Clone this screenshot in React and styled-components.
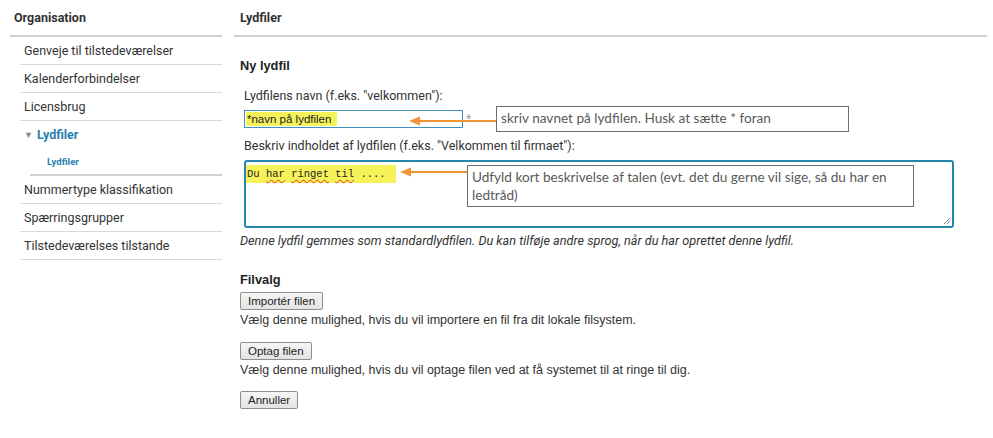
import React from "react";
import styled, { createGlobalStyle } from "styled-components";

const Global = createGlobalStyle`
  html, body { margin: 0; padding: 0; background: #fff; }
  body { width: 993px; height: 438px; overflow: hidden; font-family: Roboto, "Liberation Sans", sans-serif; color: #333; }
`;

const Page = styled.div`
  display: flex;
  align-items: flex-start;
  padding: 0 6px 0 10px;
`;

const Sidebar = styled.nav`
  width: 212px;
  flex: none;
`;

const PanelHeader = styled.div`
  height: 35px;
  display: flex;
  align-items: center;
  padding-left: ${(p) => p.$indent || 4}px;
  font-size: 12.5px;
  font-weight: 700;
  color: #333;
  border-bottom: 2px solid #cfcfcf;
`;

const NavList = styled.ul`
  list-style: none;
  margin: 0 0 0 10px;
  padding: 0;
`;

const NavItem = styled.li`
  height: ${(p) => (p.$thick ? 26 : 27)}px;
  display: flex;
  align-items: center;
  padding-left: ${(p) => (p.$thick ? 17 : 4)}px;
  margin-left: ${(p) => (p.$thick ? 10 : 0)}px;
  font-size: ${(p) => (p.$thick ? 9.6 : 12.5)}px;
  font-weight: ${(p) => (p.$active ? 700 : 400)};
  color: ${(p) => (p.$active ? "#2a7fae" : "#333")};
  border-bottom: ${(p) => (p.$noline ? "none" : p.$thick ? "2px solid #d2d2d2" : "1px solid #d9d9d9")};
`;

const Caret = styled.span`
  color: #8a8a8a;
  font-size: 9px;
  margin-right: 4px;
`;

const Main = styled.main`
  margin-left: 12px;
  flex: 1;
`;

const Content = styled.div`
  padding: 22px 0 0 6px;
`;

const SectionTitle = styled.h3`
  margin: 0;
  font-size: 12.8px;
  line-height: 14px;
  font-weight: 700;
  color: #222;
  font-family: "Liberation Sans", Arial, sans-serif;
`;

const Field = styled.div`
  padding-left: 4px;
  position: relative;
  margin-top: ${(p) => p.$mt}px;
`;

const Label = styled.div`
  font-size: 12.5px;
  color: #333;
  line-height: 14px;
`;

const InputRow = styled.div`
  display: flex;
  align-items: flex-start;
  margin-top: 7px;
`;

const TextInput = styled.div`
  width: 215px;
  height: 16px;
  border: 1px solid #3d8fc0;
  display: flex;
  align-items: center;
  padding: 0 1px;
`;

const Highlight = styled.span`
  background: #f6f25a;
  display: inline-block;
  white-space: pre;
  height: ${(p) => p.$h || 14}px;
  line-height: ${(p) => p.$h || 14}px;
  padding: 0 ${(p) => p.$pr || 6}px 0 1px;
  font-family: ${(p) => (p.$mono ? '"Liberation Mono", "DejaVu Sans Mono", monospace' : '"Liberation Sans", Arial, sans-serif')};
  font-size: ${(p) => (p.$mono ? 10.5 : 11.5)}px;
  color: #222;
`;

const Squiggle = styled.span`
  text-decoration: underline wavy #e03030;
  text-decoration-thickness: 1px;
  text-underline-offset: 2px;
  text-decoration-skip-ink: none;
`;

const Req = styled.span`
  color: #a0a0a0;
  font-size: 12px;
  margin-left: 3px;
  margin-top: 2px;
`;

const TextArea = styled.div`
  margin-top: 7px;
  width: 706px;
  height: 64px;
  border: 2px solid #2388ab;
  border-radius: 3px;
  position: relative;
`;

const Grip = styled.svg`
  position: absolute;
  right: 1px;
  bottom: 1px;
`;

const Note = styled.div`
  margin-top: 5px;
  font-size: 12.7px;
  line-height: 15px;
  font-style: italic;
  color: #333;
`;

const Callout = styled.div`
  position: absolute;
  left: ${(p) => p.$x}px;
  top: ${(p) => p.$y}px;
  width: ${(p) => p.$w}px;
  height: ${(p) => p.$h}px;
  box-sizing: border-box;
  border: 1px solid #6e6e6e;
  background: #fff;
  padding: 2px 4px;
  font-family: Lato, "Open Sans", sans-serif;
  font-size: 13.6px;
  line-height: 18px;
  color: #5a5a5a;
`;

const Arrow = styled.svg`
  position: absolute;
  left: ${(p) => p.$x}px;
  top: ${(p) => p.$y}px;
  overflow: visible;
`;

const FileSection = styled.div`
  margin-top: 25px;
`;

const Button = styled.button`
  display: block;
  font-family: "Liberation Sans", Arial, sans-serif;
  font-size: 11.5px;
  color: #222;
  height: 18px;
  padding: 0 7px;
  border: 1px solid #8f8f8f;
  border-radius: 2px;
  background: linear-gradient(#f6f6f6, #e3e3e3);
  margin-top: ${(p) => p.$mt || 0}px;
`;

const Help = styled.div`
  font-family: "Liberation Sans", Arial, sans-serif;
  font-size: 12.5px;
  line-height: 13px;
  color: #333;
  margin-top: 4px;
`;

function OrangeArrow({ x, y, len }) {
  return (
    <Arrow $x={x} $y={y - 6} width={len} height={12}>
      <line x1={len} y1={6} x2={8} y2={6} stroke="#ef9437" strokeWidth="2" />
      <polygon points="0,6 11,1.5 11,10.5" fill="#ef9437" />
    </Arrow>
  );
}

export default function App() {
  return (
    <>
      <Global />
      <Page>
        <Sidebar>
          <PanelHeader $indent={4}>Organisation</PanelHeader>
          <NavList>
            <NavItem>Genveje til tilstedeværelser</NavItem>
            <NavItem>Kalenderforbindelser</NavItem>
            <NavItem>Licensbrug</NavItem>
            <NavItem $active $noline>
              <Caret>▼</Caret>Lydfiler
            </NavItem>
            <NavItem $active $thick>Lydfiler</NavItem>
            <NavItem>Nummertype klassifikation</NavItem>
            <NavItem>Spærringsgrupper</NavItem>
            <NavItem>Tilstedeværelses tilstande</NavItem>
          </NavList>
        </Sidebar>
        <Main>
          <PanelHeader $indent={6}>Lydfiler</PanelHeader>
          <Content>
            <SectionTitle>Ny lydfil</SectionTitle>
            <Field $mt={16}>
              <Label>Lydfilens navn (f.eks. "velkommen"):</Label>
              <InputRow>
                <TextInput>
                  <Highlight $pr={6}>*navn på lydfilen</Highlight>
                </TextInput>
                <Req>*</Req>
              </InputRow>
              <OrangeArrow x={169} y={32} len={91} />
              <Callout $x={256} $y={17} $w={353} $h={26}>
                skriv navnet på lydfilen. Husk at sætte * foran
              </Callout>
            </Field>
            <Field $mt={11}>
              <Label>Beskriv indholdet af lydfilen (f.eks. "Velkommen til firmaet"):</Label>
              <TextArea>
                <Highlight $mono $h={18} $pr={10}>
                  {"Du "}<Squiggle>har</Squiggle>{" "}<Squiggle>ringet</Squiggle>{" "}<Squiggle>til</Squiggle>{" ...."}
                </Highlight>
                <Grip width="8" height="8" viewBox="0 0 8 8">
                  <line x1="1" y1="7" x2="7" y2="1" stroke="#888" strokeWidth="1" />
                  <line x1="4" y1="7" x2="7" y2="4" stroke="#888" strokeWidth="1" />
                </Grip>
              </TextArea>
              <OrangeArrow x={160} y={33} len={70} />
              <Callout $x={227} $y={26} $w={447} $h={42}>
                Udfyld kort beskrivelse af talen (evt. det du gerne vil sige, så du har en ledtråd)
              </Callout>
            </Field>
            <Note>
              Denne lydfil gemmes som standardlydfilen. Du kan tilføje andre sprog, når du har oprettet denne lydfil.
            </Note>
            <FileSection>
              <SectionTitle>Filvalg</SectionTitle>
              <Button $mt={5}>Importér filen</Button>
              <Help>Vælg denne mulighed, hvis du vil importere en fil fra dit lokale filsystem.</Help>
              <Button $mt={15}>Optag filen</Button>
              <Help>Vælg denne mulighed, hvis du vil optage filen ved at få systemet til at ringe til dig.</Help>
              <Button $mt={14}>Annuller</Button>
            </FileSection>
          </Content>
        </Main>
      </Page>
    </>
  );
}
